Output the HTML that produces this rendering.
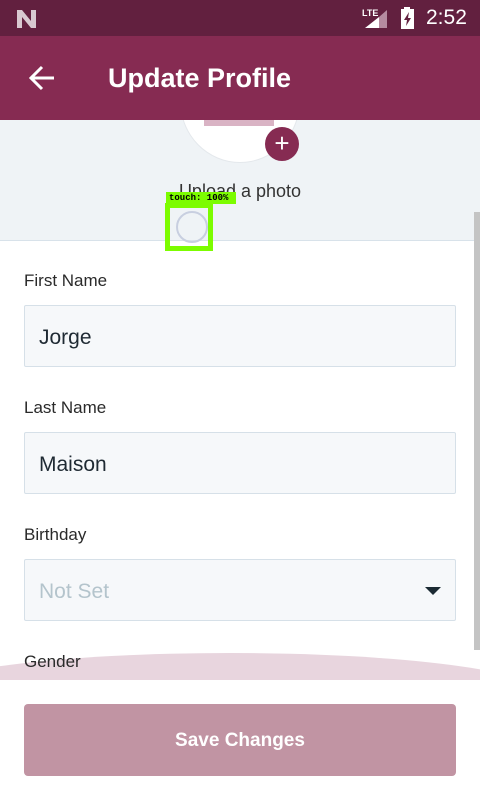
<!DOCTYPE html>
<html><head><meta charset="utf-8"><style>
*{margin:0;padding:0;box-sizing:border-box}
body{width:480px;height:800px;overflow:hidden;position:relative;background:#fff;font-family:"Liberation Sans",sans-serif;color:#222}
.abs{position:absolute}
.label{position:absolute;left:24px;font-size:17px;color:#2a2a2a}
.inp{position:absolute;left:24px;width:432px;height:62px;background:#f6f8fa;border:1px solid #d6e0e8;border-radius:2px;font-size:21px;padding-left:14px;line-height:64px;color:#1f2a33}
</style></head><body>
<div class="abs" style="left:0;top:0;width:480px;height:36px;background:#62203f"></div>
<svg class="abs" style="left:16px;top:9px" width="22" height="20" viewBox="0 0 22 20"><path d="M1 1h5l9 11V1h5v18h-5L6 8v11H1z" fill="#d8c8d0"/></svg>
<div class="abs" style="left:362px;top:8px;color:#fff;font-size:9px;font-weight:bold">LTE</div>
<svg class="abs" style="left:365px;top:10px" width="24" height="18"><polygon points="14,7 22,0 22,18 14,18" fill="#b58ba0"/><polygon points="0,18 14,7 14,18" fill="#fff"/></svg>
<svg class="abs" style="left:400px;top:7px" width="16" height="22"><rect x="4" y="0" width="6" height="3" fill="#fff"/><rect x="1" y="2" width="13" height="20" fill="#fff"/><path d="M9 5L4 13h3l-1 6 5-8H8z" fill="#62203f"/></svg>
<div class="abs" style="left:426px;top:6px;color:#fff;font-size:21px">2:52</div>
<div class="abs" style="left:0;top:36px;width:480px;height:84px;background:#862b52"></div>
<svg class="abs" style="left:28px;top:65px" width="28" height="26" viewBox="0 0 28 26"><path d="M3 13h23M14 2L3 13l11 11" stroke="#fff" stroke-width="3" fill="none"/></svg>
<div class="abs" style="left:108px;top:63px;color:#fff;font-size:27px;font-weight:bold">Update Profile</div>
<div class="abs" style="left:0;top:120px;width:480px;height:121px;background:#eff3f6;border-bottom:1px solid #d8e2ea;overflow:hidden">
 <div class="abs" style="left:180px;top:-80px;width:120px;height:123px;border-radius:50%;background:#fff;border:1px solid #e4e8ec"></div>
 <div class="abs" style="left:204px;top:0;width:70px;height:6px;background:#d9b3c4"></div>
 <div class="abs" style="left:265px;top:7px;width:34px;height:34px;border-radius:50%;background:#862b52;color:#fff;font-size:26px;line-height:32px;text-align:center">+</div>
 <div class="abs" style="left:0;width:480px;top:61px;text-align:center;font-size:18px;color:#333">Upload a photo</div>
</div>
<div class="abs" style="left:474px;top:212px;width:6px;height:438px;background:#c4c4c4"></div>
<div class="abs" style="left:166px;top:192px;width:70px;height:12px;background:#7cfc00;font-family:'Liberation Mono',monospace;font-size:9px;font-weight:bold;color:#000;line-height:12px;padding-left:3px">touch: 100%</div>
<div class="abs" style="left:165px;top:203px;width:48px;height:48px;border:5px solid #7cfc00"></div>
<div class="abs" style="left:176px;top:211px;width:32px;height:32px;border-radius:50%;border:2px solid #c8cfe0"></div>
<div class="label" style="top:271px">First Name</div>
<div class="inp" style="top:305px">Jorge</div>
<div class="label" style="top:398px">Last Name</div>
<div class="inp" style="top:432px">Maison</div>
<div class="label" style="top:525px">Birthday</div>
<div class="inp" style="top:559px;color:#b4c4cc">Not Set</div>
<svg class="abs" style="left:425px;top:586px" width="16" height="10"><path d="M0 1h16L8 9z" fill="#1b2a33"/></svg>
<div class="abs" style="left:-80px;top:653px;width:620px;height:80px;border-radius:50%;background:#e8d5de"></div>
<div class="label" style="top:652px">Gender</div>
<div class="abs" style="left:0;top:680px;width:480px;height:120px;background:#fff"></div>
<div class="abs" style="left:24px;top:704px;width:432px;height:72px;background:#c194a3;border-radius:4px;color:#fff;font-size:19px;font-weight:bold;text-align:center;line-height:74px">Save Changes</div>
</body></html>
